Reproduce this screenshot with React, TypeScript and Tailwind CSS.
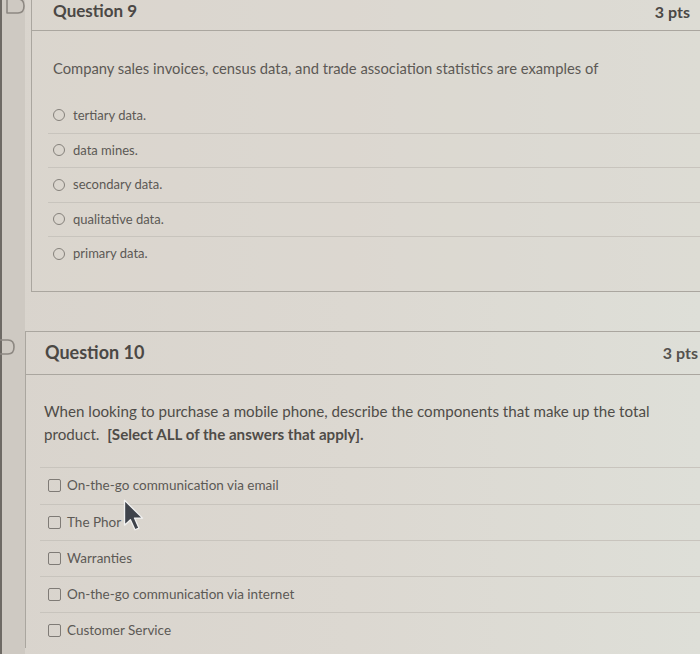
import React from "react";

const font = { fontFamily: "Lato, 'Open Sans', sans-serif" };

function Radio() {
  return <span className="inline-block w-[12px] h-[12px] rounded-full border-[1.5px] border-[#85817b] shrink-0" />;
}
function Check() {
  return <span className="inline-block w-[13px] h-[13px] rounded-[2px] border-[1.5px] border-[#7f7b76] shrink-0" />;
}

function Bookmark() {
  return (
    <svg width="20" height="16" viewBox="0 0 20 16" fill="none">
      <path d="M1 1 H12 Q18 1 18 8 Q18 15 12 15 H1 Z" stroke="#8d8882" strokeWidth="1.6" strokeLinejoin="round" />
    </svg>
  );
}

export default function App() {
  const q9 = ["tertiary data.", "data mines.", "secondary data.", "qualitative data.", "primary data."];
  const q10 = [
    "On-the-go communication via email",
    "The Phor",
    "Warranties",
    "On-the-go communication via internet",
    "Customer Service",
  ];
  return (
    <div
      style={font}
      className="relative w-[700px] h-[654px] overflow-hidden flex flex-row bg-linear-to-r from-[#d9d4cd] via-[#dcd8d1] to-[#dedfd8] text-[#5c5955]"
    >
      <div className="w-[2px] bg-[#6e6a65] shrink-0" />
      <div className="w-[23px] shrink-0 bg-[#ceC9c2] flex flex-col">
        <div className="mt-[-2px] ml-[4px]">
          <Bookmark />
        </div>
        <div className="h-[325px]" />
        <div className="ml-[-6px]">
          <Bookmark />
        </div>
      </div>
      <div className="flex-1 flex flex-col min-w-0">
        {/* Question 9 */}
        <div className="ml-[6px] border-l border-b border-[#aaa69f] bg-[#dbd7d0]/40">
          <div className="h-[31px] border-b border-[#aaa69f] flex items-start justify-between pl-[21px] pr-[10px]">
            <span className="text-[17px] font-bold text-[#4b4845] leading-[22px]">Question 9</span>
            <span className="text-[16px] font-bold text-[#4b4845] leading-[22px] mt-[1px]">3 pts</span>
          </div>
          <div className="pt-[27px] pl-[21px] pb-[20px]">
            <p className="text-[14.75px] leading-[20px] whitespace-nowrap">
              Company sales invoices, census data, and trade association statistics are examples of
            </p>
            <div className="mt-[20px] ml-[-5px]">
              {q9.map((t, i) => (
                <div
                  key={t}
                  className={`h-[34.5px] flex items-center gap-[8px] pl-[5px] ${i > 0 ? "border-t border-[#c8c4bd]" : ""}`}
                >
                  <Radio />
                  <span className="text-[13px]">{t}</span>
                </div>
              ))}
            </div>
          </div>
        </div>
        <div className="h-[39px]" />
        {/* Question 10 */}
        <div className="border-l border-t border-[#aaa69f]">
          <div className="h-[43px] border-b border-[#aaa69f] flex items-center justify-between pl-[19px] pr-[2px]">
            <span className="text-[18px] font-bold text-[#4b4845]">Question 10</span>
            <span className="text-[16px] font-bold text-[#55524e]">3 pts</span>
          </div>
          <div className="pt-[25px] pl-[18px]">
            <p className="text-[15.15px] leading-[23px] text-[#4f4c48] whitespace-nowrap">
              When looking to purchase a mobile phone, describe the components that make up the total
              <br />
              product.&nbsp; <span className="font-bold">[Select ALL of the answers that apply].</span>
            </p>
            <div className="mt-[21px] ml-[-4px] border-t border-[#c8c4bd]">
              {q10.map((t, i) => (
                <div
                  key={t}
                  className={`h-[36px] flex items-center gap-[6px] pl-[8px] ${i > 0 ? "border-t border-[#c8c4bd]" : ""}`}
                >
                  <Check />
                  <span className="text-[13.5px]">{t}</span>
                </div>
              ))}
            </div>
          </div>
        </div>
      </div>
      {/* mouse cursor */}
      <svg className="absolute left-[122px] top-[499px]" width="26" height="34" viewBox="0 0 18 26">
        <path
          d="M1 1 L1 20 L5.5 15.8 L9 23.5 L12 22.2 L8.6 14.6 L14.8 14.6 Z"
          fill="#3f434b"
          stroke="#f2f2f2"
          strokeWidth="1"
          strokeLinejoin="round"
        />
      </svg>
    </div>
  );
}
